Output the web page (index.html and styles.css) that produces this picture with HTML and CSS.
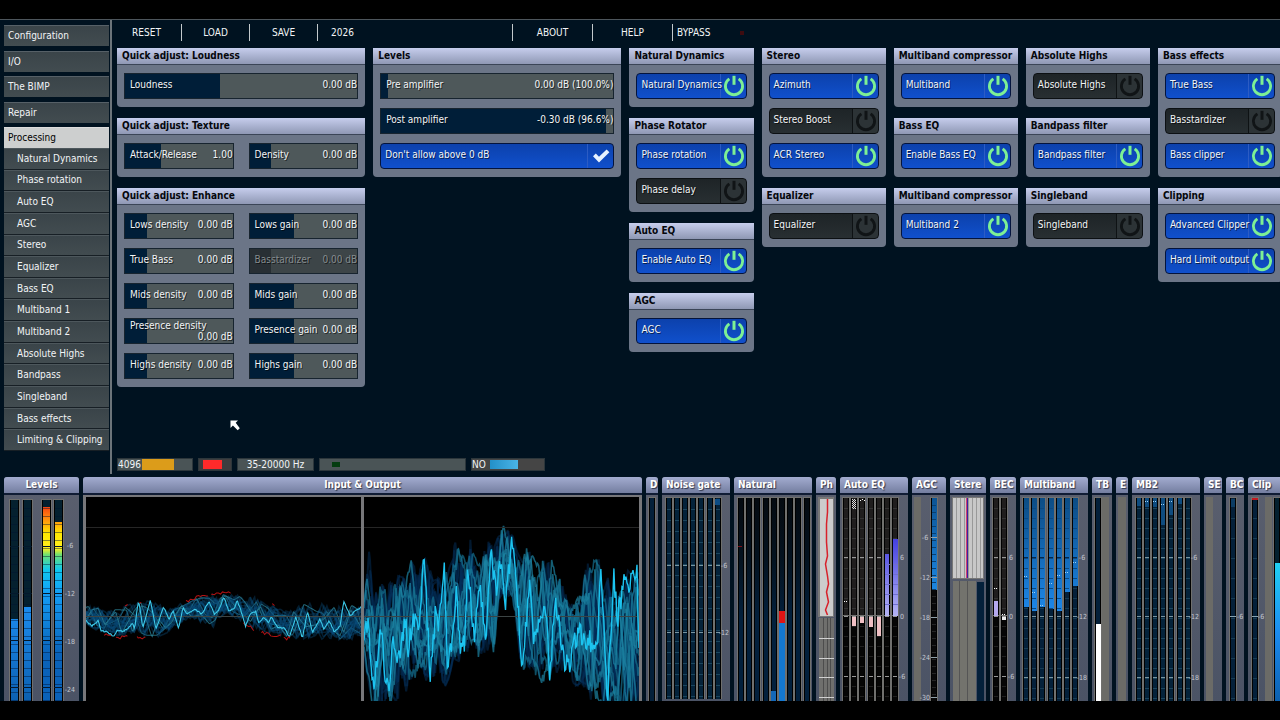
FILE: index.html
```html
<!DOCTYPE html>
<html lang="en">
<head>
<meta charset="utf-8">
<title>Audio Processor</title>
<link rel="stylesheet" href="styles.css">
</head>
<body>
<svg class="defs" aria-hidden="true">
  <symbol id="power" viewBox="0 0 22 22"><path d="M6.4 3.9a8.6 8.6 0 1 0 9.2 0" fill="none" stroke="currentColor" stroke-width="2.8"/><path d="M11 .8v9" stroke="currentColor" stroke-width="3"/></symbol>
  <symbol id="check" viewBox="0 0 18 14"><path d="M1 7.2 3.8 4.6 7 7.8 14.6.6 17.4 3.2 7 13.4Z" fill="currentColor"/></symbol>
</svg>
<main class="app">
  <section class="upper">
    <nav class="side">
      <div class="side-main">
        <a href="#">Configuration</a>
        <a href="#">I/O</a>
        <a href="#">The BIMP</a>
        <a href="#">Repair</a>
        <a href="#" class="current" aria-current="page">Processing</a>
      </div>
      <div class="side-sub">
        <a href="#">Natural Dynamics</a>
        <a href="#">Phase rotation</a>
        <a href="#">Auto EQ</a>
        <a href="#">AGC</a>
        <a href="#">Stereo</a>
        <a href="#">Equalizer</a>
        <a href="#">Bass EQ</a>
        <a href="#">Multiband 1</a>
        <a href="#">Multiband 2</a>
        <a href="#">Absolute Highs</a>
        <a href="#">Bandpass</a>
        <a href="#">Singleband</a>
        <a href="#">Bass effects</a>
        <a href="#">Limiting &amp; Clipping</a>
      </div>
    </nav>
    <div class="work">
      <div class="toolbar">
        <button type="button">RESET</button>
        <button type="button">LOAD</button>
        <button type="button">SAVE</button>
        <button type="button" class="preset">2026</button>
        <button type="button" class="wide">ABOUT</button>
        <button type="button" class="wide">HELP</button>
        <button type="button" class="bypass">BYPASS<i></i></button>
      </div>
      <div class="panels">
        <div class="col">
          <section class="panel">
            <h2>Quick adjust: Loudness</h2>
            <div class="body">
              <label class="slider"><input type="range" value="41"><span>Loudness</span><output>0.00 dB</output></label>
            </div>
          </section>
          <section class="panel">
            <h2>Quick adjust: Texture</h2>
            <div class="body two">
              <label class="slider"><input type="range" value="33"><span>Attack/Release</span><output>1.00</output></label>
              <label class="slider"><input type="range" value="20"><span>Density</span><output>0.00 dB</output></label>
            </div>
          </section>
          <section class="panel">
            <h2>Quick adjust: Enhance</h2>
            <div class="body two">
              <label class="slider"><input type="range" value="20"><span>Lows density</span><output>0.00 dB</output></label>
              <label class="slider"><input type="range" value="41"><span>Lows gain</span><output>0.00 dB</output></label>
              <label class="slider"><input type="range" value="20"><span>True Bass</span><output>0.00 dB</output></label>
              <label class="slider off"><input type="range" value="20" disabled><span>Basstardizer</span><output>0.00 dB</output></label>
              <label class="slider"><input type="range" value="20"><span>Mids density</span><output>0.00 dB</output></label>
              <label class="slider"><input type="range" value="41"><span>Mids gain</span><output>0.00 dB</output></label>
              <label class="slider wrap"><input type="range" value="20"><span>Presence density</span><output>0.00 dB</output></label>
              <label class="slider"><input type="range" value="41"><span>Presence gain</span><output>0.00 dB</output></label>
              <label class="slider"><input type="range" value="20"><span>Highs density</span><output>0.00 dB</output></label>
              <label class="slider"><input type="range" value="41"><span>Highs gain</span><output>0.00 dB</output></label>
            </div>
          </section>
        </div>
        <div class="col">
          <section class="panel">
            <h2>Levels</h2>
            <div class="body">
              <label class="slider"><input type="range" value="3"><span>Pre amplifier</span><output>0.00 dB (100.0%)</output></label>
              <label class="slider"><input type="range" value="97"><span>Post amplifier</span><output>-0.30 dB (96.6%)</output></label>
              <label class="toggle"><input type="checkbox" checked><span>Don't allow above 0 dB</span><svg class="tick"><use href="#check"/></svg></label>
            </div>
          </section>
        </div>
        <div class="col">
          <section class="panel">
            <h2>Natural Dynamics</h2>
            <div class="body">
              <label class="toggle"><input type="checkbox" checked><span>Natural Dynamics</span><svg><use href="#power"/></svg></label>
            </div>
          </section>
          <section class="panel">
            <h2>Phase Rotator</h2>
            <div class="body">
              <label class="toggle"><input type="checkbox" checked><span>Phase rotation</span><svg><use href="#power"/></svg></label>
              <label class="toggle"><input type="checkbox"><span>Phase delay</span><svg><use href="#power"/></svg></label>
            </div>
          </section>
          <section class="panel">
            <h2>Auto EQ</h2>
            <div class="body">
              <label class="toggle"><input type="checkbox" checked><span>Enable Auto EQ</span><svg><use href="#power"/></svg></label>
            </div>
          </section>
          <section class="panel">
            <h2>AGC</h2>
            <div class="body">
              <label class="toggle"><input type="checkbox" checked><span>AGC</span><svg><use href="#power"/></svg></label>
            </div>
          </section>
        </div>
        <div class="col">
          <section class="panel">
            <h2>Stereo</h2>
            <div class="body">
              <label class="toggle"><input type="checkbox" checked><span>Azimuth</span><svg><use href="#power"/></svg></label>
              <label class="toggle"><input type="checkbox"><span>Stereo Boost</span><svg><use href="#power"/></svg></label>
              <label class="toggle"><input type="checkbox" checked><span>ACR Stereo</span><svg><use href="#power"/></svg></label>
            </div>
          </section>
          <section class="panel">
            <h2>Equalizer</h2>
            <div class="body">
              <label class="toggle"><input type="checkbox"><span>Equalizer</span><svg><use href="#power"/></svg></label>
            </div>
          </section>
        </div>
        <div class="col">
          <section class="panel">
            <h2>Multiband compressor</h2>
            <div class="body">
              <label class="toggle"><input type="checkbox" checked><span>Multiband</span><svg><use href="#power"/></svg></label>
            </div>
          </section>
          <section class="panel">
            <h2>Bass EQ</h2>
            <div class="body">
              <label class="toggle"><input type="checkbox" checked><span>Enable Bass EQ</span><svg><use href="#power"/></svg></label>
            </div>
          </section>
          <section class="panel">
            <h2>Multiband compressor</h2>
            <div class="body">
              <label class="toggle"><input type="checkbox" checked><span>Multiband 2</span><svg><use href="#power"/></svg></label>
            </div>
          </section>
        </div>
        <div class="col">
          <section class="panel">
            <h2>Absolute Highs</h2>
            <div class="body">
              <label class="toggle"><input type="checkbox"><span>Absolute Highs</span><svg><use href="#power"/></svg></label>
            </div>
          </section>
          <section class="panel">
            <h2>Bandpass filter</h2>
            <div class="body">
              <label class="toggle"><input type="checkbox" checked><span>Bandpass filter</span><svg><use href="#power"/></svg></label>
            </div>
          </section>
          <section class="panel">
            <h2>Singleband</h2>
            <div class="body">
              <label class="toggle"><input type="checkbox"><span>Singleband</span><svg><use href="#power"/></svg></label>
            </div>
          </section>
        </div>
        <div class="col">
          <section class="panel">
            <h2>Bass effects</h2>
            <div class="body">
              <label class="toggle"><input type="checkbox" checked><span>True Bass</span><svg><use href="#power"/></svg></label>
              <label class="toggle"><input type="checkbox"><span>Basstardizer</span><svg><use href="#power"/></svg></label>
              <label class="toggle"><input type="checkbox" checked><span>Bass clipper</span><svg><use href="#power"/></svg></label>
            </div>
          </section>
          <section class="panel">
            <h2>Clipping</h2>
            <div class="body">
              <label class="toggle"><input type="checkbox" checked><span>Advanced Clipper</span><svg><use href="#power"/></svg></label>
              <label class="toggle"><input type="checkbox" checked><span>Hard Limit output</span><svg><use href="#power"/></svg></label>
            </div>
          </section>
        </div>
      </div>
      <div class="status">
        <div class="stat buffer"><span>4096</span><i class="amber"></i></div>
        <div class="stat load"><i></i></div>
        <div class="stat range">35-20000 Hz</div>
        <div class="stat signal"><i></i></div>
        <div class="stat no"><span>NO</span><i></i></div>
      </div>
    </div>
    <svg class="cursor" viewBox="0 0 10 11"><path d="M.5.5H8L5.700 2.800 9.800 8.200 7.700 10.300 2.900 5.500.5 8Z" fill="#fff"/></svg>
  </section>
  <section class="meters">
    <section class="meter w-levels mid"><h3>Levels</h3><svg data-meter="levels"></svg></section>
    <section class="meter w-scope mid"><h3>Input &amp; Output</h3>
      <div class="scopes">
        <svg data-scope="input" viewBox="0 0 274 204" preserveAspectRatio="none"></svg>
        <svg data-scope="output" viewBox="0 0 274 204" preserveAspectRatio="none"></svg>
      </div>
    </section>
    <section class="meter w-12"><h3>D</h3><svg data-meter="d"></svg></section>
    <section class="meter w-68"><h3>Noise gate</h3><svg data-meter="gate"></svg></section>
    <section class="meter w-78"><h3>Natural</h3><svg data-meter="natural"></svg></section>
    <section class="meter w-20"><h3>Ph</h3><svg data-meter="phase"></svg></section>
    <section class="meter w-68"><h3>Auto EQ</h3><svg data-meter="autoeq"></svg></section>
    <section class="meter w-34"><h3>AGC</h3><svg data-meter="agc"></svg></section>
    <section class="meter w-36"><h3>Stere</h3><svg data-meter="stereo"></svg></section>
    <section class="meter w-26"><h3>BEC</h3><svg data-meter="basseq"></svg></section>
    <section class="meter w-68"><h3>Multiband</h3><svg data-meter="multi"></svg></section>
    <section class="meter w-20"><h3>TB</h3><svg data-meter="truebass"></svg></section>
    <section class="meter w-12"><h3>E</h3><svg data-meter="e"></svg></section>
    <section class="meter w-68"><h3>MB2</h3><svg data-meter="mb2"></svg></section>
    <section class="meter w-18"><h3>SE</h3><svg data-meter="single"></svg></section>
    <section class="meter w-18"><h3>BC</h3><svg data-meter="clipper"></svg></section>
    <section class="meter w-36"><h3>Clip</h3><svg data-meter="clip"></svg></section>
  </section>
</main>
<script src="meters.js"></script>
</body>
</html>
```

FILE: styles.css
```css
* { box-sizing: border-box; }
body {
  margin: 0;
  padding: 19px 0;
  background: #000;
  color: #f2f4f6;
  font: 10px/14px "DejaVu Sans Condensed", "DejaVu Sans", sans-serif;
  overflow: hidden;
}
button, input { font: inherit; color: inherit; margin: 0; }
h2, h3 { margin: 0; font-size: 10px; white-space: nowrap; overflow: hidden; }
a { color: inherit; text-decoration: none; }
.defs { position: absolute; width: 0; height: 0; }

.app {
  display: flex;
  flex-direction: column;
  height: calc(100vh - 38px);
  border-top: 1px solid #4d565c;
  background: #001220;
  overflow: hidden;
}
.upper { position: relative; display: flex; flex: none; height: 454px; }

.side {
  display: flex;
  flex-direction: column;
  flex: none;
  width: 112px;
  padding: 5px 1px 23px 4px;
  border-right: 2px solid #6c747a;
}
.side a {
  display: flex;
  align-items: center;
  padding-left: 4px;
  background: linear-gradient(#3a4449, #424c50);
  white-space: nowrap;
}
.side-main {
  display: flex;
  flex-direction: column;
  justify-content: space-between;
  height: 123px;
}
.side-main a { height: 21px; border-top: 1px solid #566067; }
.side-main a.current { background: #cdcfcf; color: #000; border-color: #dcdcdc; }
.side-sub { display: flex; flex-direction: column; flex: 1; }
.side-sub a { flex: 1; padding-left: 13px; border-bottom: 1px solid #171f25; border-top: 1px solid #4d575c; }

.work { flex: 1; min-width: 0; display: flex; flex-direction: column; padding-left: 5px; }
.toolbar { display: flex; padding: 4px 0 7px; }
.toolbar button {
  width: 68px;
  height: 17px;
  padding: 0;
  border: 0;
  border-left: 1px solid #c3c9cc;
  background: none;
}
.toolbar button:first-child { width: 64px; border: 0; padding-right: 5px; }
.toolbar .preset { width: 195px; text-align: left; padding-left: 13px; }
.toolbar .wide { width: 80px; }
.toolbar .bypass { display: flex; justify-content: space-between; align-items: center; padding-left: 4px; width: 72px; }
.bypass i { width: 4px; height: 4px; background: #3d0c10; }

.panels {
  display: grid;
  grid-template-columns: 2fr 2fr repeat(5, 1fr);
  gap: 8px;
  margin-right: -2px;
  flex: 1;
}
.col { display: flex; flex-direction: column; gap: 11px; min-width: 0; }
.panel { background: #6b7587; border-radius: 0 0 4px 4px; }
.panel h2 {
  height: 17px;
  padding-left: 5px;
  line-height: 16px;
  color: #05070c;
  background: linear-gradient(#c6cdec, #8f98b4);
  border-bottom: 1px solid #3b4557;
}
.body { display: grid; gap: 9px 15px; padding: 8px 7px; }
.two { grid-template-columns: repeat(2, minmax(0, 1fr)); }

.slider, .toggle {
  position: relative;
  display: flex;
  align-items: center;
  height: 26px;
  white-space: nowrap;
  text-shadow: 1px 1px 0 rgba(0, 0, 0, .6);
}
.slider { justify-content: space-between; padding: 0 1px 2px 6px; }
.slider input {
  position: absolute;
  inset: 0;
  width: 100%;
  height: 100%;
  appearance: none;
  border: 1px solid #17242f;
  background: linear-gradient(90deg, #001e38 var(--fill), #4e585a var(--fill));
}
.slider input::-webkit-slider-thumb { appearance: none; width: 1px; height: 24px; background: transparent; }
.slider span, .slider output { position: relative; pointer-events: none; }
.wrap { flex-wrap: wrap; align-content: center; padding-bottom: 0; line-height: 11px; }
.wrap output { margin-left: auto; }
.off { color: #858c8f; }
.off input { background: linear-gradient(90deg, #282f34 var(--fill), #3d4548 var(--fill)); }

.toggle { padding: 0 0 2px 5px; }
.toggle input {
  position: absolute;
  inset: 0;
  width: 100%;
  height: 100%;
  appearance: none;
  border: 1px solid #0c1013;
  border-radius: 4px;
  background: linear-gradient(90deg, transparent calc(100% - 26px), #0e1214 calc(100% - 26px), #0e1214 calc(100% - 25px), #2c3336 calc(100% - 25px)), linear-gradient(#1e2427, #282f32);
}
.toggle input:checked {
  border-color: #04143c;
  background: linear-gradient(90deg, transparent calc(100% - 26px), #2c5cc4 calc(100% - 26px), #2c5cc4 calc(100% - 25px), transparent calc(100% - 25px)), linear-gradient(#0c41ac, #1050cc);
}
.toggle span { position: relative; pointer-events: none; }
.toggle svg { position: absolute; top: 2px; right: 2px; width: 22px; height: 22px; color: #101416; pointer-events: none; }
.toggle input:checked ~ svg { color: #7df094; }
.toggle input:checked ~ .tick { top: 6px; right: 4px; width: 18px; height: 14px; color: #e6f2ff; }

.status { display: flex; gap: 5px; padding-bottom: 3px; }
.stat { display: flex; align-items: center; height: 13px; background: #4a5456; border: 1px solid #2c363b; white-space: nowrap; }
.stat i { height: 11px; }
.buffer { width: 76px; }
.buffer i { width: 32px; margin-left: 1px; background: #dc9c1a; }
.load { width: 34px; background: #3d3d3f; padding-left: 4px; }
.load i { width: 19px; height: 9px; background: #ff2a2a; }
.range { width: 77px; justify-content: center; }
.signal { width: 147px; padding-left: 12px; }
.signal i { width: 8px; height: 5px; background: #043c10; }
.no { width: 74px; background: #454545; }
.no i { width: 28px; margin-left: 4px; background: linear-gradient(90deg, #2390c8, #4ab4e6); height: 9px; }

.cursor { position: absolute; left: 230px; top: 400px; width: 10px; height: 11px; }

.meters { display: flex; gap: 4px; flex: 1; min-height: 0; padding: 3px 0 0 4px; margin-right: -4px; }
.meter { flex: none; display: flex; flex-direction: column; min-width: 0; overflow: hidden; background: linear-gradient(#5a5f6e, #4b5365); border-radius: 3px 3px 0 0; }
.meter h3 {
  flex: none;
  height: 18px;
  padding-left: 4px;
  line-height: 15px;
  color: #fff;
  background: linear-gradient(#a3acd0, #747ea0);
  border-bottom: 2px solid #101c34;
  text-shadow: 1px 1px 1px #30364a;
}
.mid h3 { text-align: center; padding: 0; }
.meter > svg { flex: 1; width: 100%; min-height: 0; font-size: 7px; shape-rendering: crispEdges; }
.scopes { flex: 1; min-height: 0; display: grid; grid-template-columns: 1fr 1fr; gap: 3px; padding: 2px 3px 0; background: #77777a; }
.scopes svg { width: 100%; height: 100%; min-height: 0; background: #000; }
.w-levels { width: 75px; }
.w-scope { flex: 1; }
.w-12 { width: 12px; }
.w-18 { width: 18px; }
.w-20 { width: 20px; }
.w-26 { width: 26px; }
.w-34 { width: 34px; }
.w-36 { width: 36px; }
.w-68 { width: 68px; }
.w-78 { width: 78px; }
```

FILE: meters.js
```js
const NS = 'http://www.w3.org/2000/svg';

document.querySelectorAll('.slider input').forEach(i => {
  const paint = () => i.style.setProperty('--fill', i.value + '%');
  i.addEventListener('input', paint);
  paint();
});

function add(svg, tag, attrs, text) {
  const el = document.createElementNS(NS, tag);
  for (const k in attrs) el.setAttribute(k, attrs[k]);
  if (text !== undefined) el.textContent = text;
  svg.appendChild(el);
  return el;
}
const rect = (svg, x, y, w, h, fill) => add(svg, 'rect', { x, y, width: w, height: h, fill });
function gradient(svg, id, stops, y1, y2) {
  const g = add(svg, 'linearGradient', { id, gradientUnits: 'userSpaceOnUse', x1: 0, x2: 0, y1, y2 });
  stops.forEach(([o, c]) => add(g, 'stop', { offset: o, 'stop-color': c }));
  return `url(#${id})`;
}
/* Segment separators across one bar. */
function segments(svg, x, y, w, h, step, line) {
  for (let s = y + step; s < y + h; s += step) rect(svg, x + 1, Math.round(s), w - 2, 1, line);
}
function bar(svg, x, y, w, h, fill, line, step) {
  rect(svg, x - 1, y - 1, w + 2, h + 1, '#70706e');
  rect(svg, x, y, w, h, '#000');
  rect(svg, x + 1, y, w - 2, h, fill);
  if (line) segments(svg, x, y, w, h, step || 10, line);
}
function scale(svg, x, marks) {
  marks.forEach(([t, y]) => add(svg, 'text', { x, y: y + 3, fill: '#c4c8d0', 'text-anchor': 'middle' }, t));
}
const H = 212;
const draw = {
  levels(s) {
    const hot = gradient(s, 'hot', [[0, '#f02a10'], [.09, '#ff8010'], [.2, '#ffe800'], [.3, '#ffee20'], [.34, '#6ee070'], [.44, '#10c8f0'], [.6, '#149cf4'], [1, '#0a62b8']], 8, 160);
    const cool = gradient(s, 'cool', [[0, '#1c8cf0'], [1, '#0c60b0']], 110, 206);
    [[6, 124, cool], [19, 112, cool], [38, 12, hot], [50, 27, hot]].forEach(([x, top, fill]) => {
      bar(s, x, 5, 9, H, '#04202f');
      rect(s, x + 1, top, 7, H - top, fill);
      segments(s, x, 5, 9, H, 8, 'rgba(0,20,50,.45)');
      [51, 98, 145, 192].forEach(y => rect(s, x, y, 9, 1, '#04182c'));
    });
    scale(s, 66, [['-6', 50], ['-12', 98], ['-18', 146], ['-24', 194]]);
  },
  d(s) { bar(s, 3, 3, 6, H, '#04203a'); },
  gate(s) {
    for (let i = 0; i < 7; i++) {
      const x = 4 + Math.round(i * 8.1);
      bar(s, x, 3, 6, 201, '#04223a', '#1b465e', 11);
      [70, 137].forEach(y => rect(s, x + 1, y, 4, 1, '#7894a0'));
    }
    rect(s, 53, 4, 5, 6, '#0c4c84');
    scale(s, 62, [['-6', 70], ['-12', 137]]);
  },
  natural(s) {
    const g = gradient(s, 'nat', [[0, '#050a10'], [.3, '#04121f'], [.6, '#03203c'], [1, '#03203c']], 0, 206);
    for (let i = 0; i < 9; i++) bar(s, 4 + Math.round(i * 8.2), 3, 6, H, g);
    rect(s, 4, 51, 4, 1, '#7a1018');
    rect(s, 45, 116, 6, 12, '#e01414');
    rect(s, 45, 128, 6, 84, '#1478d0');
    rect(s, 37, 196, 5, 12, '#1468b8');
  },
  phase(s) {
    rect(s, 2, 2, 16, 120, '#777');
    rect(s, 4, 4, 13, 117, '#ccc');
    add(s, 'path', { d: 'M11.500 4v13l-1 12v18l1 14-2 8 2 12 1 8-2 8 2 10-3 8 2 5', fill: 'none', stroke: '#d8202a', 'shape-rendering': 'auto', 'stroke-width': 1.5 });
    rect(s, 3, 123, 15, 90, '#6f6f6d');
    [7, 11, 14].forEach(x => rect(s, x, 123, 1, 90, '#4c4c4c'));
    [143, 163, 182, 202].forEach(y => rect(s, 3, y, 15, 1, '#d0d0d0'));
  },
  autoeq(s) {
    const g = gradient(s, 'vio', [[0, '#4440e0'], [1, '#b4b4f4']], 44, 121);
    const low = [0, 9, 6, 10, 19, 0, 0];
    for (let i = 0; i < 7; i++) {
      const x = 3 + Math.round(i * 8.2);
      bar(s, x, 3, 6, 118, '#1f1d1d', '#333', 10);
      bar(s, x, 121, 6, 90, '#050505', '#202020', 10);
      [62, 121, 181].forEach(y => rect(s, x + 1, y, 4, 1, '#999'));
      if (low[i]) rect(s, x + 1, 122, 4, low[i], '#f0c0c4');
    }
    rect(s, 45, 59, 4, 62, g);
    rect(s, 53, 44, 5, 77, g);
    segments(s, 44, 59, 7, 60, 10, '#6f6fd0');
    segments(s, 52, 59, 7, 60, 10, '#6f6fd0');
    for (let y = 4; y < 13; y += 2) for (let x = 12; x < 16; x += 2) { rect(s, x, y, 1, 1, '#ddd'); rect(s, x + 1, y + 1, 1, 1, '#ddd'); }
    [20, 22, 24].forEach(x => rect(s, x, 5 - (x === 22), 1, 1, '#fff'));
    rect(s, 4, 106, 1, 1, '#fff'); rect(s, 6, 106, 1, 1, '#fff');
    scale(s, 62, [['6', 62], ['0', 121], ['-6', 181]]);
  },
  agc(s) {
    rect(s, 2, 2, 7, H, '#6b6b67');
    bar(s, 19, 3, 6, H, '#080808', '#252525', 7);
    rect(s, 20, 3, 5, 92, gradient(s, 'agcg', [[0, '#0c5494'], [1, '#1c86e0']], 3, 95));
    segments(s, 19, 3, 6, 92, 7, '#0a4070');
    [42, 82, 122, 162, 202].forEach(y => rect(s, 19, y, 6, 1, '#90a0a8'));
    scale(s, 13, [['-6', 42], ['-12', 82], ['-18', 122], ['-24', 162], ['-30', 202]]);
  },
  stereo(s) {
    rect(s, 2, 2, 32, 82, '#777');
    rect(s, 3, 3, 30, 80, '#c8c8c8');
    for (let x = 6; x < 33; x += 4) rect(s, x, 3, 1, 80, '#999');
    rect(s, 16, 3, 1, 80, '#d04070'); rect(s, 17, 3, 1, 80, '#4020a0');
    rect(s, 3, 86, 23, 140, '#73736d');
    [9, 17].forEach(x => rect(s, x, 86, 1, 140, '#555'));
    rect(s, 27, 87, 7, 140, '#04203a');
  },
  basseq(s) {
    [3, 11].forEach(x => {
      bar(s, x, 3, 6, 118, '#1f1d1d', '#333', 10);
      bar(s, x, 121, 6, 90, '#050505', '#202020', 10);
      [62, 121, 181].forEach(y => rect(s, x + 1, y, 4, 1, '#999'));
      [1, 3].forEach(d => rect(s, x + d, x === 3 ? 93 : 119, 1, 1, '#fff'));
    });
    rect(s, 4, 106, 4, 15, '#b4a8ee');
    rect(s, 12, 122, 4, 3, '#eee');
    scale(s, 21, [['6', 62], ['0', 121], ['-6', 181]]);
  },
  multi(s) {
    const g = gradient(s, 'mbg', [[0, '#0c4c84'], [.5, '#1468b4'], [1, '#1c84e4']], 3, 110);
    [112, 116, 112, 114, 116, 97, 91].forEach((end, i) => {
      const x = 3 + Math.round(i * 8.2);
      bar(s, x, 3, 6, H, '#04203a', '#163c54', 10);
      rect(s, x + 1, 3, 5, end - 3, g);
      segments(s, x, 3, 6, end - 3, 10, '#0c4880');
      [62, 121, 182].forEach(y => rect(s, x + 1, y, 4, 1, y < end ? '#06284a' : '#7894a0'));
      [1, 3].forEach(d => rect(s, x + d, [81, 97, 110, 88, 80, 77, 67][i], 1, 1, '#9cd0f4'));
    });
    scale(s, 62, [['-6', 62], ['-12', 121], ['-18', 182]]);
  },
  truebass(s) {
    bar(s, 3, 3, 6, H, '#04203a');
    rect(s, 4, 129, 5, 90, '#fff');
    rect(s, 10, 2, 7, H, '#6b6b67');
  },
  e(s) { rect(s, 2, 2, 8, H, '#6b6b67'); },
  mb2(s) {
    [8, 9, 9, 27, 17, 6, 0].forEach((h, i) => {
      const x = 4 + Math.round(i * 8.1);
      bar(s, x, 3, 6, H, '#04223a', '#1b465e', 10);
      if (h) rect(s, x + 1, 3, 4, h, '#0e4c80');
      if (i > 0 && i < 5) [1, 3].forEach(d => rect(s, x + d, i === 3 ? 9 : 6, 1, 1, '#a0d4f8'));
      [62, 121, 182].forEach(y => rect(s, x + 1, y, 4, 1, '#7894a0'));
    });
    scale(s, 62, [['-6', 62], ['-12', 121], ['-18', 182]]);
  },
  single(s) { rect(s, 2, 2, 7, H, '#6b6b67'); },
  clipper(s) {
    bar(s, 4, 3, 6, H, '#04203a', '#163c54', 20);
    rect(s, 5, 4, 4, 8, '#0c3c64');
    rect(s, 4, 121, 6, 1, '#8aa4b0');
    scale(s, 14, [['-6', 121]]);
  },
  clip(s) {
    bar(s, 4, 3, 6, H, '#04203a', '#163c54', 20);
    rect(s, 4, 3, 6, 2, '#c01820');
    rect(s, 4, 121, 6, 1, '#8aa4b0');
    scale(s, 13, [['-6', 121]]);
    rect(s, 17, 2, 7, H, '#6b6b67');
    bar(s, 26, 3, 6, H, '#04202f');
    rect(s, 27, 68, 5, 150, gradient(s, 'clg', [[0, '#20d0f4'], [.5, '#1c8cf0'], [1, '#0c60b0']], 68, 206));
  }
};
document.querySelectorAll('[data-meter]').forEach(s => draw[s.dataset.meter](s));

let seed = 7;
const rnd = () => (seed = (seed * 16807) % 2147483647) / 2147483647;
function at(points, x) {
  for (let i = 1; i < points.length; i++) {
    const [x0, y0] = points[i - 1], [x1, y1] = points[i];
    if (x <= x1) return y0 + (y1 - y0) * (x - x0) / (x1 - x0);
  }
  return points[points.length - 1][1];
}
/* Points are held at three times the drawn size. */
const fit = (str, dx, dy) => str.split(' ').map(p => { const [x, y] = p.split(',').map(Number); return [(x - dx) / 3, (y - dy) / 3]; });
/* A random line between two envelopes; spread says how often it reaches them. */
function wander(top, bottom, gap, spread) {
  const knots = [];
  for (let x = -2; x < 282; x += gap * (.5 + rnd())) {
    const r = rnd() * 2 - 1;
    const k = .5 + .5 * Math.sign(r) * Math.pow(Math.abs(r), spread);
    const t = at(top, x), b = at(bottom, x);
    knots.push([x, t + (b - t) * k]);
  }
  return x => at(knots, x);
}
function trace(svg, f, step, color, width, opacity) {
  let d = '';
  for (let x = 0; x <= 274; x += step) d += (d ? 'L' : 'M') + x.toFixed(1) + ' ' + f(x).toFixed(1);
  return add(svg, 'path', { d, fill: 'none', stroke: color, 'stroke-width': width, opacity });
}
function guides(svg) {
  rect(svg, 0, 30, 274, 1, '#262626');
  rect(svg, 0, 119, 274, 1, '#3c4444');
}

const input = document.querySelector('[data-scope=input]');
const output = document.querySelector('[data-scope=output]');
const inMain = fit('260,540 275,556 295,540 303,570 318,573 340,587 352,568 368,572 385,562 398,545 403,565 415,478 428,562 450,478 467,566 490,498 507,536 518,510 535,562 548,500 560,520 583,505 605,520 625,482 642,520 655,508 670,468 685,512 700,505 710,480 722,512 735,556 748,520 765,512 775,548 790,530 805,545 812,528 830,560 850,562 866,588 885,528 905,592 920,512 935,575 958,535 968,565 985,540 1000,572 1018,555 1028,482 1048,525 1062,512 1082,498', 258, 171);
const inTop = fit('260,495 330,510 400,490 450,480 500,500 560,485 600,470 680,460 760,468 800,490 860,515 920,480 960,490 1000,500 1082,490', 258, 171);
const inBottom = fit('260,560 340,595 400,590 480,595 560,540 640,565 680,520 760,570 860,595 905,600 960,600 1050,605 1082,590', 258, 171);
for (let n = 0; n < 26; n++) {
  const bright = n % 8 === 7;
  trace(input, wander(inTop, inBottom, bright ? 9 : 6, bright ? .7 : 1.5), 1, bright ? '#2a8094' : '#0a4a78', bright ? 1 : 1.6, bright ? .8 : .4);
}
trace(input, x => at(inTop, x) - 2 + rnd() * 3, 2, '#c81414', 1, .9).setAttribute('stroke-dasharray', '0 48 3 14 2 54 26 4 22 50 3 300');
trace(input, x => at(inBottom, x) - 2 + rnd() * 4, 2, '#c81414', 1, .9).setAttribute('stroke-dasharray', '0 24 8 7 14 12 10 132 14 10 24 4 10 300');
guides(input);
trace(input, x => at(inMain, x) + rnd() * 1.5, 1, '#3cc8e8', 1.1, 1);

const outTop = fit('42,430 60,270 68,430 100,385 150,375 180,360 186,240 192,360 222,290 260,350 300,350 314,250 330,300 345,350 360,240 378,320 395,330 414,250 430,290 450,235 485,235 510,340 540,250 555,340 580,310 620,340 650,450 690,440 705,330 740,280 760,350 800,440 830,360 864,360', 42, 141);
const outBottom = fit('42,620 70,800 120,780 160,760 200,660 230,700 290,720 330,620 380,610 430,620 448,450 490,440 512,660 550,700 595,700 640,660 700,750 770,800 830,800 864,780', 42, 141);
const outMain = fit('42,590 55,490 62,640 70,710 80,640 92,530 105,670 118,720 128,580 140,650 155,570 165,510 175,600 190,500 205,520 222,330 240,685 255,500 265,520 282,355 292,665 305,560 318,420 330,610 342,580 352,330 372,570 387,400 408,560 420,310 438,410 452,330 465,470 485,260 500,420 512,665 525,540 537,385 550,570 570,470 590,520 597,690 613,450 630,560 640,630 660,640 675,560 690,550 705,600 715,570 740,590 750,340 770,745 788,370 800,510 820,380 835,440 840,350 858,370 864,600', 42, 141);
for (let n = 0; n < 16; n++) trace(output, wander(outTop, outBottom, 4, 1), 1, '#04305c', 2, .5);
for (let n = 0; n < 9; n++) {
  const f = wander(outTop, outBottom, 6, 1.1);
  trace(output, x => f(x) + (rnd() - .5) * 12, 1, n % 2 ? '#147090' : '#1c84a4', 1.6, .7);
}
guides(output);
trace(output, x => at(outMain, x) + (rnd() - .5) * 22, 1, '#1cc4f0', 1.4, 1);
```
